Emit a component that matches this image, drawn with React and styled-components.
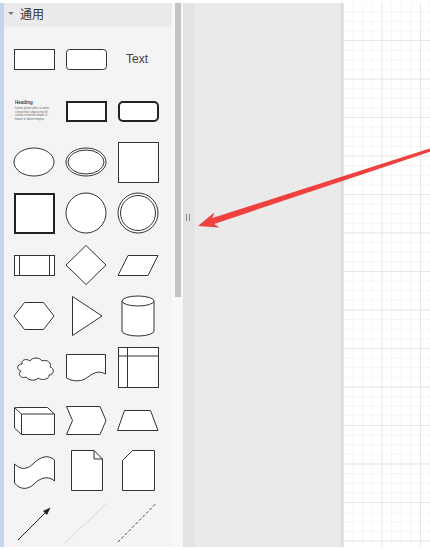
import styled, { createGlobalStyle } from "styled-components";

const GlobalStyle = createGlobalStyle`
  html, body {
    margin: 0;
    padding: 0;
    background: #ffffff;
  }
  body {
    font-family: "Liberation Sans", "Noto Sans CJK SC", sans-serif;
  }
`;

const Page = styled.div`
  position: relative;
  width: 430px;
  height: 550px;
  box-sizing: border-box;
  padding: 3px 0;
  display: flex;
  overflow: hidden;
  background: #ffffff;
`;

const EdgeStrip = styled.div`
  width: 4px;
  background: #c3d5ee;
`;

const Sidebar = styled.div`
  width: 168px;
  background: #f4f4f4;
  display: flex;
  flex-direction: column;
`;

const SectionHeader = styled.div`
  height: 27px;
  background: #ebebeb;
  display: flex;
  align-items: center;
  gap: 6px;
  padding: 0 0 3px 4px;
  box-sizing: border-box;
  font-family: "Noto Sans CJK SC", sans-serif;
  font-size: 12px;
  color: #333;
`;

const Caret = styled.span`
  width: 0;
  height: 0;
  border-left: 3px solid transparent;
  border-right: 3px solid transparent;
  border-top: 3px solid #7a7a7a;
`;

const ShapeGrid = styled.div`
  display: grid;
  grid-template-columns: repeat(3, 52px);
  grid-auto-rows: 51.33px;
  padding: 7px 0 0 4px;
`;

const Cell = styled.div`
  display: flex;
  align-items: center;
  justify-content: center;
  svg {
    overflow: visible;
  }
`;

const ScrollTrack = styled.div`
  width: 11px;
  background: #f8f8f8;
  padding-left: 3px;
  box-sizing: border-box;
`;

const ScrollThumb = styled.div`
  width: 6px;
  height: 294px;
  background: #c4c4c4;
`;

const MiddlePanel = styled.div`
  width: 160px;
  display: flex;
  background: #eaeaea;
  border-right: 2px solid #dcdcdc;
  box-sizing: border-box;
`;

const SplitStripe = styled.div`
  width: 12px;
  background: #e3e3e3;
  display: flex;
  justify-content: center;
  padding-right: 2px;
  box-sizing: border-box;
`;

const Grip = styled.div`
  margin-top: 211px;
  width: 2px;
  height: 7px;
  border-left: 1px solid #8a8a8a;
  border-right: 1px solid #8a8a8a;
`;

const Canvas = styled.div`
  flex: 1;
  background-color: #ffffff;
  background-image:
    linear-gradient(#e7e7e7 1px, transparent 1px),
    linear-gradient(90deg, #e7e7e7 1px, transparent 1px),
    linear-gradient(#f4f4f4 1px, transparent 1px),
    linear-gradient(90deg, #f4f4f4 1px, transparent 1px);
  background-size: 38.5px 38.5px, 38.5px 38.5px, 9.625px 9.625px,
    9.625px 9.625px;
  background-position: 0 -1.5px, 0 0, 0 -1.5px, 0 0;
`;

const Overlay = styled.svg`
  position: absolute;
  left: 0;
  top: 0;
  pointer-events: none;
`;

const S = { fill: "#fff", stroke: "#333", strokeWidth: 1 };
const T = { fill: "#fff", stroke: "#222", strokeWidth: 2 };

const shapes = [
  <rect x="6.5" y="16.5" width="40" height="20" {...S} />,
  <rect x="6.5" y="16.5" width="40" height="20" rx="3" {...S} />,
  <text x="25" y="30" textAnchor="middle" fontSize="12" fill="#444" fontFamily="Liberation Sans">
    Text
  </text>,
  <g fontFamily="Liberation Sans">
    <text x="7" y="19" fontSize="4.5" fontWeight="bold" fill="#444">Heading</text>
    <text x="7" y="24" fontSize="2.8" fill="#666">Lorem ipsum dolor sit amet,</text>
    <text x="7" y="27.5" fontSize="2.8" fill="#666">consectetur adipisicing elit,</text>
    <text x="7" y="31" fontSize="2.8" fill="#666">sed do eiusmod tempor ut</text>
    <text x="7" y="34.5" fontSize="2.8" fill="#666">labore et dolore magna.</text>
  </g>,
  <rect x="7" y="17" width="39" height="19" {...T} />,
  <rect x="7" y="17" width="39" height="19" rx="4" {...T} />,
  <ellipse cx="26" cy="26" rx="20" ry="14" {...S} />,
  <g>
    <ellipse cx="26" cy="26" rx="20" ry="14" {...S} />
    <ellipse cx="26" cy="26" rx="18" ry="12" {...S} />
  </g>,
  <rect x="6.5" y="6.5" width="40" height="40" {...S} />,
  <rect x="7" y="7" width="39" height="39" {...T} />,
  <circle cx="26" cy="26" r="20" {...S} />,
  <g>
    <circle cx="26" cy="26" r="20" {...S} />
    <circle cx="26" cy="26" r="17.5" {...S} />
  </g>,
  <g>
    <rect x="6.5" y="16.5" width="40" height="20" {...S} />
    <path d="M11.5,16.5 V36.5 M41.5,16.5 V36.5" {...S} />
  </g>,
  <polygon points="26,6.5 46,26 26,45.5 6,26" {...S} />,
  <polygon points="16,16.5 46,16.5 36,36.5 6,36.5" {...S} />,
  <polygon points="16.5,12.5 35.5,12.5 46,26 35.5,39.5 16.5,39.5 6,26" {...S} />,
  <polygon points="12.5,6.5 42,26 12.5,45.5" {...S} />,
  <g>
    <path d="M10,11 a16,5 0 0,1 32,0 V41 a16,5 0 0,1 -32,0 Z" {...S} />
    <path d="M10,11 a16,5 0 0,0 32,0" {...S} />
  </g>,
  <path
    d="M14,23 C9,23 8,29 13,30 C9,33 13,38 18,36 C21,40 28,40 30,37 C34,40 42,38 41,34 C46,34 47,27 42,26 C44,22 39,18 34,20 C32,16 24,16 22,20 C18,17 13,19 14,23 Z"
    {...S}
  />,
  <path d="M6.5,13.5 H45.5 V33 C37,28 31,34 25,38 C19,41 12,40 6.5,37 Z" {...S} />,
  <g>
    <rect x="6.5" y="6.5" width="40" height="40" {...S} />
    <path d="M6.5,15 H46.5 M15.5,6.5 V46.5" {...S} />
  </g>,
  <g>
    <path d="M6.5,14.5 H39.5 L46.5,21 V41.5 H13.5 L6.5,35 Z" {...S} />
    <path d="M6.5,14.5 L13.5,21 H46.5 M13.5,21 V41.5" {...S} />
  </g>,
  <polygon points="6.5,13.5 40,13.5 46,27.5 40,41.5 6.5,41.5 12.5,27.5" {...S} />,
  <polygon points="12.5,17.5 38.5,17.5 46,37.5 5.5,37.5" {...S} />,
  <path
    d="M6.5,20 C14,27 20,25 26,19 C32,13 40,10 46.5,16 V37 C40,31 32,34 26,40 C20,46 12,46 6.5,39 Z"
    {...S}
  />,
  <path d="M11.5,6.5 H34 L42.5,15 V46.5 H11.5 Z M34,6.5 V15 H42.5" {...S} />,
  <path d="M20.5,6.5 H42.5 V46.5 H10.5 V16.5 Z" {...S} />,
  <g>
    <line x1="10" y1="45" x2="38" y2="17" stroke="#222" strokeWidth="1" />
    <polygon points="42.5,12.5 35,16 39,20" fill="#222" />
  </g>,
  <line x1="5" y1="48" x2="47" y2="8" stroke="#aaa" strokeWidth="1" strokeDasharray="1 1.5" />,
  <line x1="6" y1="47" x2="43.5" y2="9" stroke="#444" strokeWidth="1" strokeDasharray="3 2" />,
];

export default function App() {
  return (
    <>
      <GlobalStyle />
      <Page>
        <EdgeStrip />
        <Sidebar>
          <SectionHeader>
            <Caret />
            通用
          </SectionHeader>
          <ShapeGrid>
            {shapes.map((shape, i) => (
              <Cell key={i}>
                <svg width="52" height="52" viewBox="0 0 52 52">
                  {shape}
                </svg>
              </Cell>
            ))}
          </ShapeGrid>
        </Sidebar>
        <ScrollTrack>
          <ScrollThumb />
        </ScrollTrack>
        <MiddlePanel>
          <SplitStripe>
            <Grip />
          </SplitStripe>
        </MiddlePanel>
        <Canvas />
        <Overlay width="430" height="550" viewBox="0 0 430 550">
          <polygon
            points="198,226 214.5,212.2 212.3,218.1 429.6,148.4 430.4,151.6 214.1,223.9 219.5,227.4"
            fill="#f0403f"
          />
        </Overlay>
      </Page>
    </>
  );
}
